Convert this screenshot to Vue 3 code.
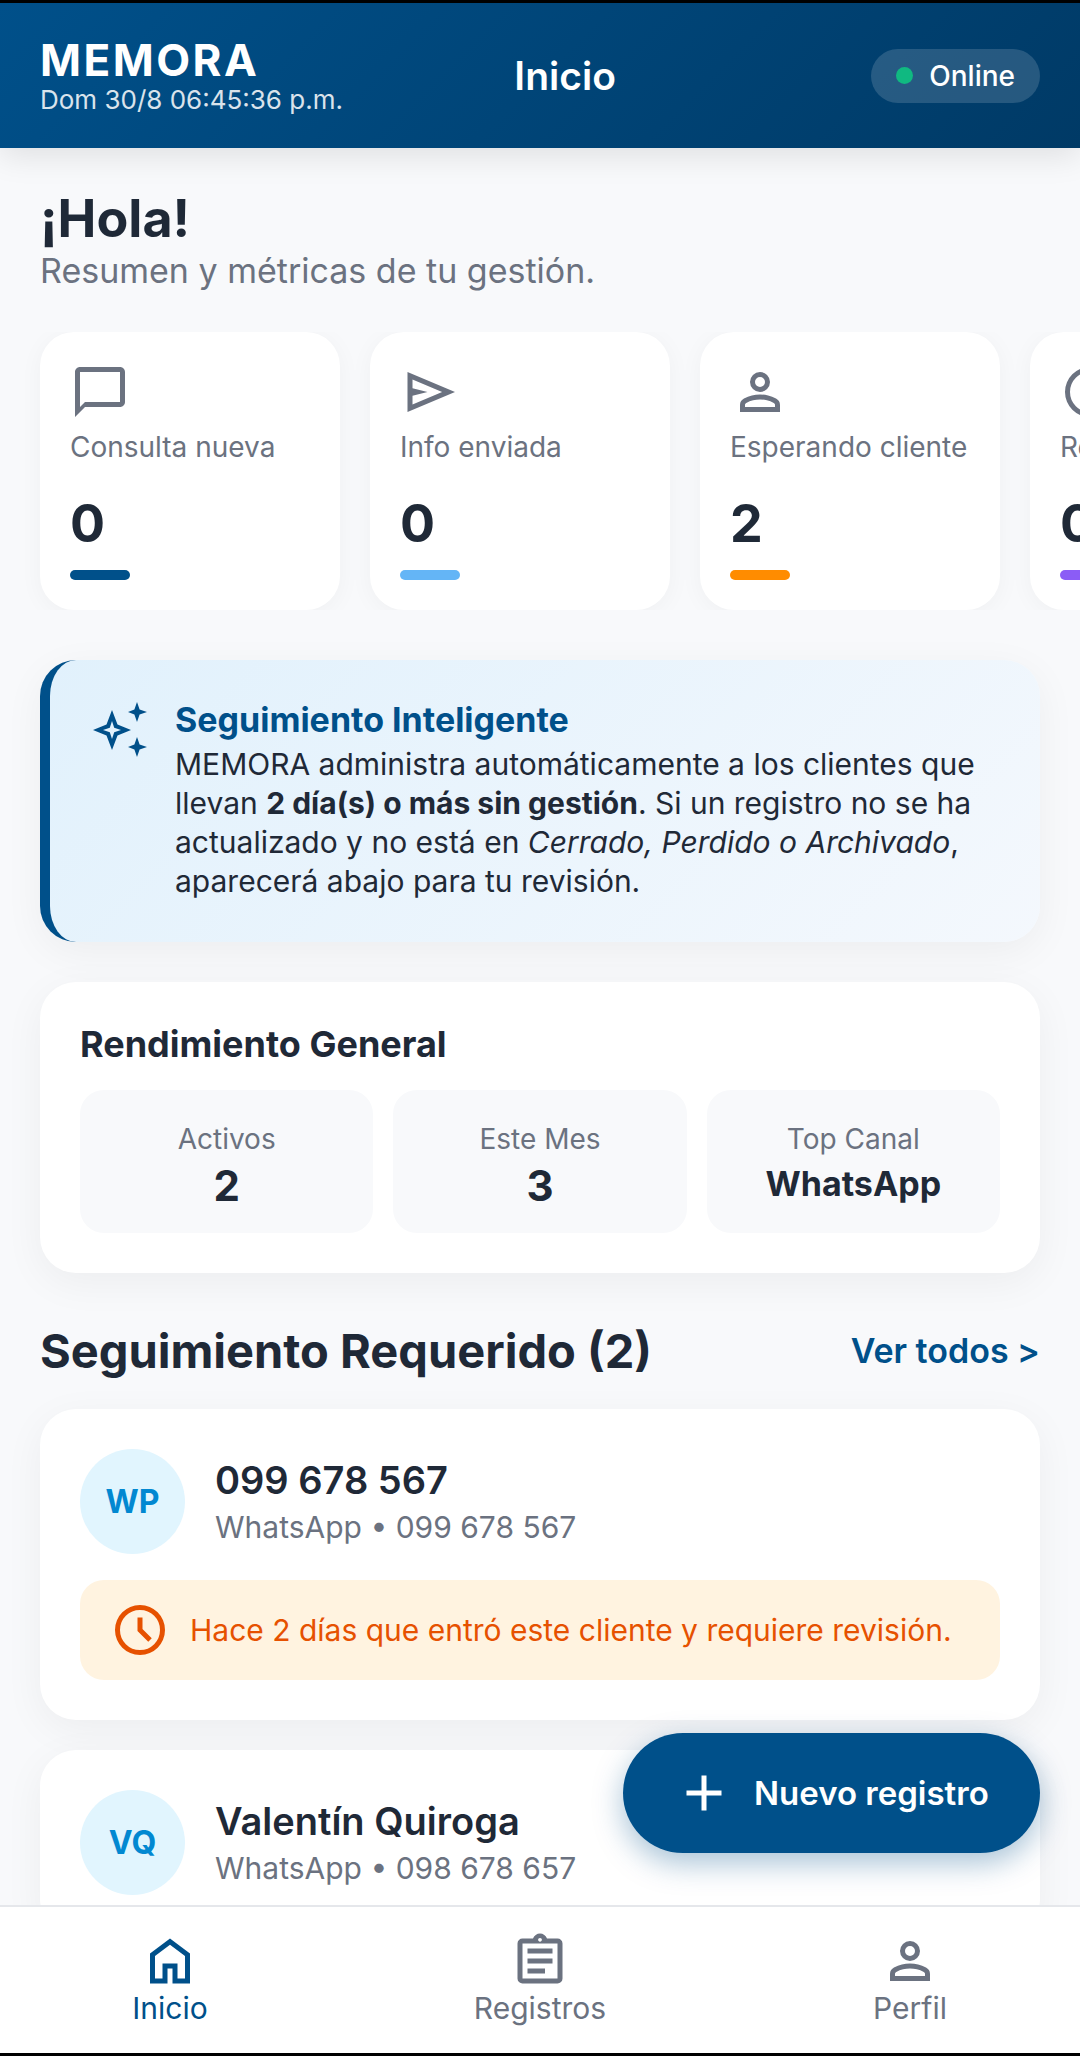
<script setup>
const P = {
  chat: 'M20 2H4c-1.1 0-2 .9-2 2v18l4-4h14c1.1 0 2-.9 2-2V4c0-1.1-.9-2-2-2zm0 14H6l-2 2V4h16v12z',
  send: 'M3 20V4l19 8-19 8Zm2-3 11.85-5L5 7v3.5l6 1.5-6 1.5V17Z',
  person: 'M12 12q-1.65 0-2.825-1.175Q8 9.65 8 8q0-1.65 1.175-2.825Q10.35 4 12 4q1.65 0 2.825 1.175Q16 6.35 16 8q0 1.65-1.175 2.825Q13.65 12 12 12Zm-8 8v-2.8q0-.85.438-1.563.437-.712 1.162-1.087 1.55-.775 3.15-1.163Q10.35 13 12 13t3.25.387q1.6.388 3.15 1.163.725.375 1.162 1.087Q20 16.35 20 17.2V20H4Zm2-2h12v-.8q0-.275-.137-.5-.138-.225-.363-.35-1.35-.675-2.725-1.012Q13.4 15 12 15t-2.775.338q-1.375.337-2.725 1.012-.225.125-.362.35-.138.225-.138.5v.8Zm6-8q.825 0 1.413-.588Q14 8.825 14 8t-.587-1.412Q12.825 6 12 6q-.825 0-1.412.588Q10 7.175 10 8t.588 1.412Q11.175 10 12 10Z',
  clock: 'm15.3 16.7 1.4-1.4-3.7-3.7V7h-2v5.4ZM12 22q-2.075 0-3.9-.788-1.825-.787-3.175-2.137-1.35-1.35-2.137-3.175Q2 14.075 2 12t.788-3.9q.787-1.825 2.137-3.175 1.35-1.35 3.175-2.138Q9.925 2 12 2t3.9.787q1.825.788 3.175 2.138 1.35 1.35 2.137 3.175Q22 9.925 22 12t-.788 3.9q-.787 1.825-2.137 3.175-1.35 1.35-3.175 2.137Q14.075 22 12 22Zm0-2q3.325 0 5.663-2.337Q20 15.325 20 12t-2.337-5.663Q15.325 4 12 4T6.337 6.337Q4 8.675 4 12t2.337 5.663Q8.675 20 12 20Z',
  home: 'M6 19h3v-6h6v6h3v-9l-6-4.5L6 10v9Zm-2 2V9l8-6 8 6v12h-7v-6h-2v6H4Z',
  list: 'M5 21q-.825 0-1.412-.587Q3 19.825 3 19V5q0-.825.588-1.413Q4.175 3 5 3h4.2q.325-.9 1.088-1.45Q11.05 1 12 1t1.713.55Q14.475 2.1 14.8 3H19q.825 0 1.413.587Q21 4.175 21 5v14q0 .825-.587 1.413Q19.825 21 19 21Zm0-2h14V5H5v14Zm2-2h7v-2H7v2Zm0-4h10v-2H7v2Zm0-4h10V7H7v2Zm5-4.75q.325 0 .538-.213.212-.212.212-.537 0-.325-.212-.538-.213-.212-.538-.212-.325 0-.537.212-.213.213-.213.538 0 .325.213.537.212.213.537.213Z',
}
const metrics = [
  { icon: P.chat, label: 'Consulta nueva', value: 0, color: '#00508a' },
  { icon: P.send, label: 'Info enviada', value: 0, color: '#64b5f6' },
  { icon: P.person, label: 'Esperando cliente', value: 2, color: '#ff8c00' },
  { icon: P.clock, label: 'Reservado', value: 0, color: '#8b5cf6' },
]
const stats = [
  { label: 'Activos', value: '2', big: true },
  { label: 'Este Mes', value: '3', big: true },
  { label: 'Top Canal', value: 'WhatsApp', big: false },
]
const nav = [
  { icon: P.home, label: 'Inicio', active: true },
  { icon: P.list, label: 'Registros', active: false },
  { icon: P.person, label: 'Perfil', active: false },
]
</script>

<template>
  <div class="screen">
    <header class="header">
      <div class="brand">
        <div class="logo">MEMORA</div>
        <div class="clock">Dom 30/8 06:45:36 p.m.</div>
      </div>
      <div class="page-title">Inicio</div>
      <div class="status"><span class="dot"></span>Online</div>
    </header>

    <main class="main">
      <section class="greeting">
        <h1>¡Hola!</h1>
        <p>Resumen y métricas de tu gestión.</p>
      </section>

      <div class="metrics">
        <div v-for="m in metrics" :key="m.label" class="metric">
          <svg class="icon60" viewBox="0 0 24 24"><path :d="m.icon" /></svg>
          <div class="metric-label">{{ m.label }}</div>
          <div class="metric-value">{{ m.value }}</div>
          <div class="metric-bar" :style="{ background: m.color }"></div>
        </div>
      </div>

      <section class="smart">
        <svg class="icon60" viewBox="0 0 60 60">
          <path fill-rule="evenodd" d="M22 10 27.5 24.5 41 30 27.5 35.5 22 50 16.5 35.5 3 30 16.5 24.5ZM22 21 19.8 27.8 13 30 19.8 32.2 22 39 24.2 32.2 31 30 24.2 27.8Z" />
          <path d="M47 2 49.6 9.4 57 12 49.6 14.6 47 22 44.4 14.6 38 12 44.4 9.4Z" />
          <path d="M47 37 49.6 44.4 57 47 49.6 49.6 47 57 44.4 49.6 38 47 44.4 44.4Z" />
        </svg>
        <div class="smart-body">
          <h2>Seguimiento Inteligente</h2>
          <p>MEMORA administra automáticamente a los clientes que llevan <b>2 día(s) o más sin gestión</b>. Si un registro no se ha actualizado y no está en <i>Cerrado, Perdido o Archivado</i>, aparecerá abajo para tu revisión.</p>
        </div>
      </section>

      <section class="perf">
        <h2>Rendimiento General</h2>
        <div class="tiles">
          <div v-for="s in stats" :key="s.label" class="tile">
            <div class="tile-label">{{ s.label }}</div>
            <div class="tile-value" :class="{ big: s.big }">{{ s.value }}</div>
          </div>
        </div>
      </section>

      <div class="section-head">
        <h2>Seguimiento Requerido (2)</h2>
        <span class="see-all">Ver todos &gt;</span>
      </div>

      <article class="client">
        <div class="client-top">
          <div class="avatar">WP</div>
          <div>
            <div class="client-name">099 678 567</div>
            <div class="client-sub">WhatsApp • 099 678 567</div>
          </div>
        </div>
        <div class="alert">
          <svg class="icon60" viewBox="0 0 24 24"><path :d="P.clock" /></svg>
          <span>Hace 2 días que entró este cliente y requiere revisión.</span>
        </div>
      </article>

      <article class="client">
        <div class="client-top">
          <div class="avatar">VQ</div>
          <div>
            <div class="client-name">Valentín Quiroga</div>
            <div class="client-sub">WhatsApp • 098 678 657</div>
          </div>
        </div>
      </article>

      <button class="fab">
        <svg viewBox="0 0 24 24"><path d="M11 13H5v-2h6V5h2v6h6v2h-6v6h-2v-6Z" /></svg>
        <span>Nuevo registro</span>
      </button>
    </main>

    <nav class="nav">
      <div v-for="n in nav" :key="n.label" class="nav-item" :class="{ active: n.active }">
        <svg class="icon60" viewBox="0 0 24 24"><path :d="n.icon" /></svg>
        <span>{{ n.label }}</span>
      </div>
    </nav>
  </div>
</template>

<style>
html, body { margin: 0; background: #000; }
</style>

<style scoped>
.screen {
  width: 1080px;
  height: 2056px;
  box-sizing: border-box;
  border-top: 3px solid #000;
  border-bottom: 3px solid #000;
  display: flex;
  flex-direction: column;
  overflow: hidden;
  background: #f8f9fb;
  font-family: Inter, "Liberation Sans", sans-serif;
  color: #1f2937;
}
h1, h2, p { margin: 0; }
svg { display: block; flex: none; fill: currentColor; }
.icon60 { width: 60px; height: 60px; }

.header {
  position: relative;
  z-index: 2;
  height: 145px;
  flex: none;
  box-sizing: border-box;
  padding: 0 40px;
  display: flex;
  align-items: center;
  justify-content: space-between;
  color: #fff;
  background: linear-gradient(135deg, #00508a 0%, #003a66 100%);
  box-shadow: 0 8px 30px rgba(0, 0, 0, 0.1);
}
.brand { padding-top: 2px; }
.logo { font-size: 44px; font-weight: 700; line-height: 44px; letter-spacing: 2.5px; }
.clock { margin-top: 3px; font-size: 26px; line-height: 30px; opacity: 0.85; }
.page-title {
  margin-right: 84px;
  font-size: 39px;
  font-weight: 600;
  line-height: 46px;
}
.status {
  display: flex;
  align-items: center;
  gap: 16px;
  height: 54px;
  padding: 0 25px;
  border-radius: 27px;
  background: rgba(255, 255, 255, 0.15);
  font-size: 28px;
  font-weight: 500;
}
.dot { width: 17px; height: 17px; border-radius: 50%; background: #10b981; }

.main {
  position: relative;
  flex: 1;
  min-height: 0;
  overflow: hidden;
  padding: 40px 40px 0;
}
.greeting h1 { font-size: 52px; font-weight: 700; line-height: 61px; }
.greeting p { font-size: 34px; line-height: 43px; color: #6b7280; }

.metrics {
  display: flex;
  gap: 30px;
  margin: 40px -40px 0;
  padding: 0 40px;
  overflow: hidden;
}
.metric {
  flex: none;
  width: 300px;
  height: 278px;
  box-sizing: border-box;
  padding: 30px 30px 0;
  border-radius: 34px;
  background: #fff;
  box-shadow: 0 4px 24px rgba(0, 0, 0, 0.04);
  color: #6b7280;
}
.metric-label { margin-top: 7px; font-size: 28px; line-height: 36px; white-space: nowrap; }
.metric-value { margin-top: 28px; font-size: 52px; font-weight: 700; line-height: 62px; color: #1f2937; }
.metric-bar { width: 60px; height: 10px; margin-top: 15px; border-radius: 5px; }

.smart {
  display: flex;
  gap: 25px;
  margin-top: 50px;
  height: 282px;
  box-sizing: border-box;
  padding: 39px 40px 0;
  border-left: 10px solid #00508a;
  border-radius: 36px;
  background: linear-gradient(135deg, #e1f1fc 0%, #f4f8fd 100%);
  box-shadow: 0 10px 40px rgba(0, 0, 0, 0.05);
  color: #00508a;
}
.smart > svg { margin-top: 1px; }
.smart-body h2 { font-size: 34px; font-weight: 700; line-height: 42px; margin-bottom: 4px; }
.smart-body p { font-size: 30px; line-height: 39px; color: #1f2937; }
.smart-body b { font-weight: 700; }

.perf {
  margin-top: 40px;
  height: 291px;
  box-sizing: border-box;
  padding: 40px;
  border-radius: 36px;
  background: #fff;
  box-shadow: 0 10px 40px rgba(0, 0, 0, 0.05);
}
.perf h2 { font-size: 36px; font-weight: 700; line-height: 44px; }
.tiles { display: grid; grid-template-columns: repeat(3, 1fr); gap: 20px; margin-top: 24px; }
.tile {
  height: 143px;
  box-sizing: border-box;
  padding-top: 31px;
  border-radius: 24px;
  background: #f8f9fb;
  text-align: center;
}
.tile-label { font-size: 28px; line-height: 36px; color: #6b7280; }
.tile-value { margin-top: 5px; font-size: 34px; font-weight: 700; line-height: 44px; }
.tile-value.big { margin-top: 7px; font-size: 42px; }

.section-head {
  display: flex;
  align-items: center;
  justify-content: space-between;
  margin-top: 50px;
  height: 54px;
}
.section-head h2 { font-size: 47px; font-weight: 700; }
.see-all { font-size: 34px; font-weight: 600; color: #00508a; }

.client {
  margin-top: 32px;
  padding: 40px;
  border-radius: 36px;
  background: #fff;
  box-shadow: 0 10px 40px rgba(0, 0, 0, 0.05);
}
.client + .client { margin-top: 30px; }
.client-top { display: flex; align-items: center; gap: 30px; }
.avatar {
  width: 105px;
  height: 105px;
  flex: none;
  display: flex;
  align-items: center;
  justify-content: center;
  border-radius: 50%;
  background: #e1f5fe;
  color: #0288d1;
  font-size: 32px;
  font-weight: 700;
}
.client-name { font-size: 38px; font-weight: 600; line-height: 44px; margin-bottom: 6px; }
.client-sub { font-size: 30px; line-height: 38px; color: #6b7280; }
.alert {
  display: flex;
  align-items: center;
  gap: 20px;
  height: 100px;
  margin-top: 26px;
  padding-left: 30px;
  border-radius: 24px;
  background: #fff3e0;
  color: #e65100;
  font-size: 30px;
}

.fab {
  position: absolute;
  right: 40px;
  bottom: 52px;
  width: 417px;
  height: 120px;
  display: flex;
  align-items: center;
  gap: 20px;
  padding: 0 0 0 51px;
  box-sizing: border-box;
  border: 0;
  border-radius: 60px;
  background: #00508a;
  color: #fff;
  font-family: inherit;
  font-size: 33px;
  font-weight: 600;
  box-shadow: 0 10px 30px rgba(0, 80, 138, 0.35);
}
.fab svg { width: 60px; height: 60px; }

.nav {
  flex: none;
  height: 148px;
  box-sizing: border-box;
  border-top: 2px solid #e5e7eb;
  background: #fff;
  display: grid;
  grid-template-columns: repeat(3, 370px);
  justify-content: center;
  padding: 24px 0 0;
}
.nav-item {
  display: flex;
  flex-direction: column;
  align-items: center;
  color: #6b7280;
  font-size: 30px;
  line-height: 36px;
}
.nav-item span { margin-top: -1px; }
.nav-item.active { color: #00508a; }
</style>
